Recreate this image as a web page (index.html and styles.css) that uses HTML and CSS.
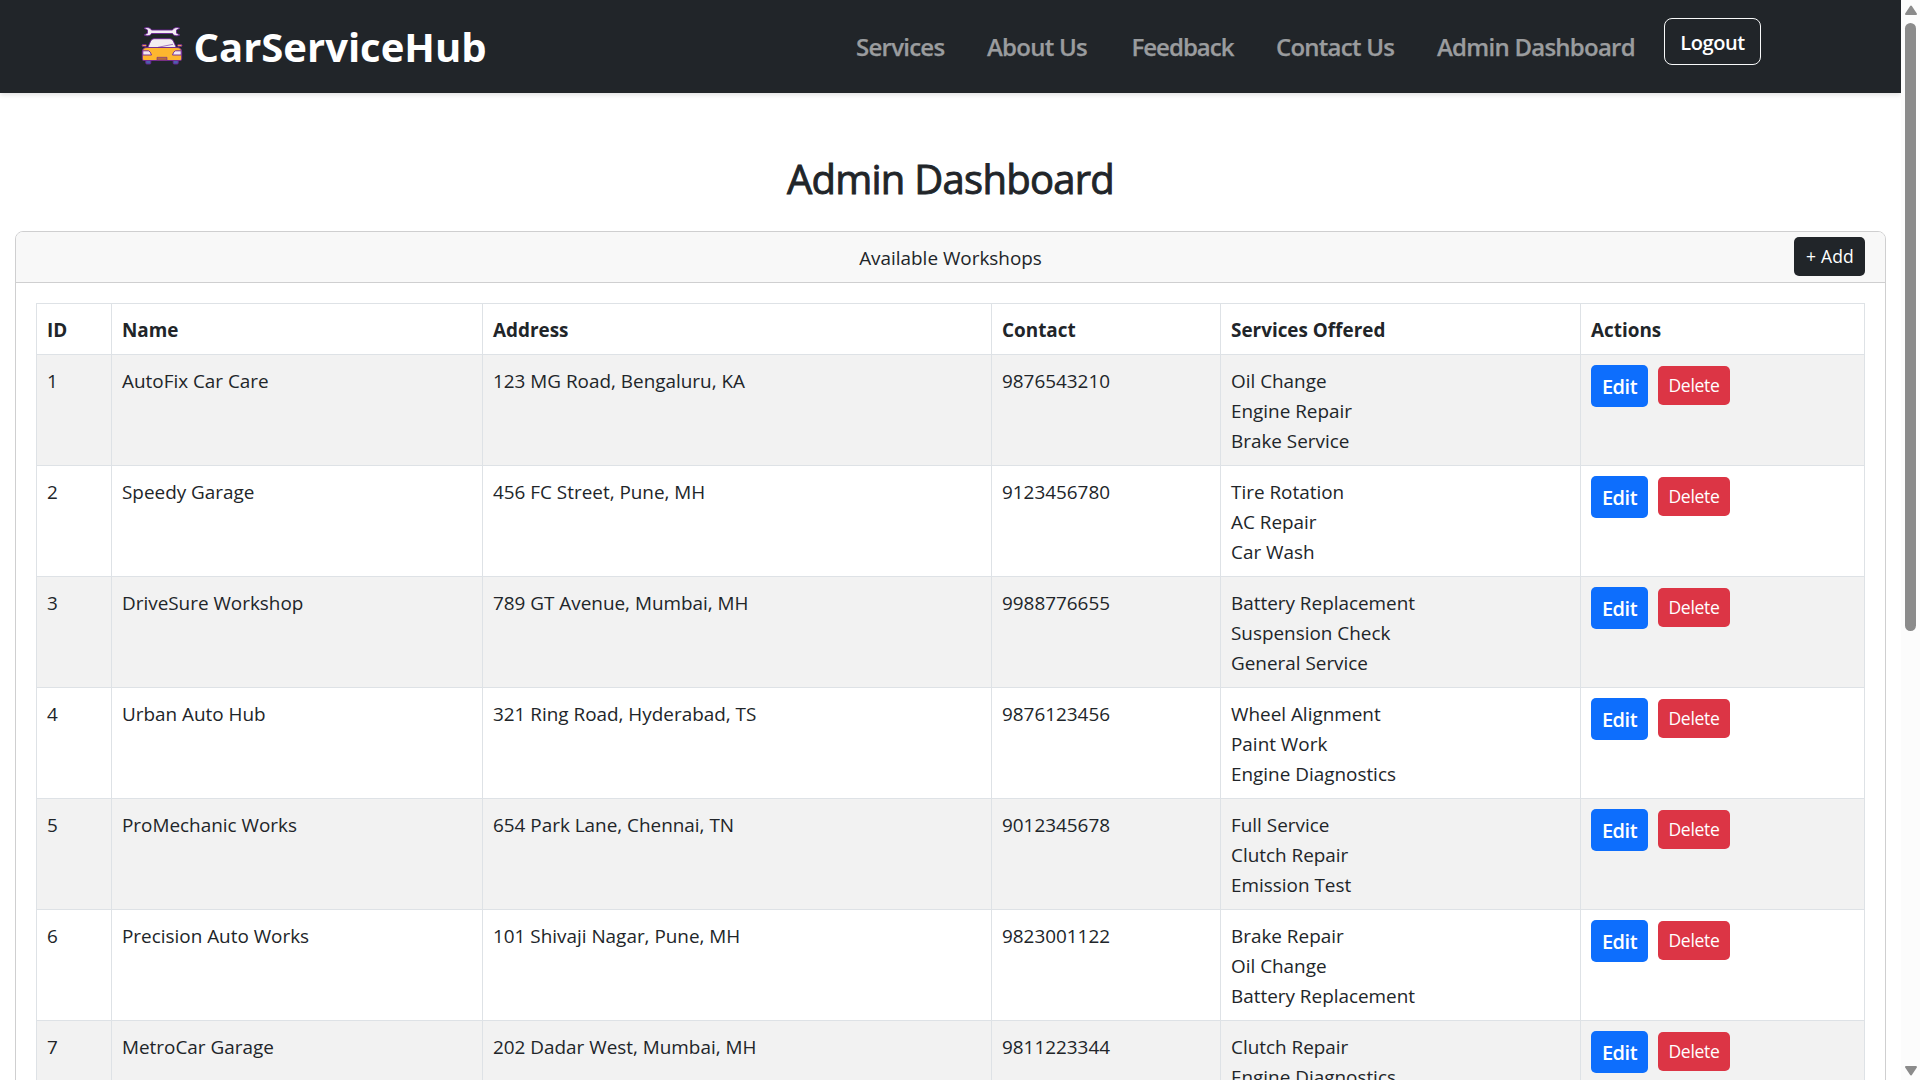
FILE: index.html
```
<!DOCTYPE html>
<html lang="en">
<head>
<meta charset="utf-8">
<title>CarServiceHub - Admin Dashboard</title>
<link rel="stylesheet" href="styles.css">
</head>
<body>
<div class="page">
  <nav class="navbar">
    <a class="brand">
      <svg class="brand-logo" viewBox="0 0 42 40" aria-hidden="true">
        <g stroke="#6c2396" stroke-width=".9" stroke-linejoin="round">
          <path d="M3.2 2.2C6.8.6 9.6 2.2 10.5 4H31.5C32.4 2.200 35.200.600 38.800 2.200L35.500 4V7.200L38.800 9C35.200 10.600 32.400 9.500 31.500 7.500H10.500C9.600 9.500 6.800 10.600 3.200 9L6.500 7.200V4Z" fill="#f3edf3"/>
          <rect x="4.800" y="32" width="5" height="6" rx="1" fill="#4b61ad"/>
          <rect x="32.200" y="32" width="5" height="6" rx="1" fill="#4b61ad"/>
          <rect x="1" y="18.500" width="4.500" height="2" rx="1" fill="#f0a04b"/>
          <rect x="36.500" y="18.500" width="4.500" height="2" rx="1" fill="#f0a04b"/>
          <path d="M6.500 22L9.700 15Q10.800 12.700 13 12.700H29Q31.200 12.700 32.300 15L35.500 22Z" fill="#f3edf0"/>
          <path d="M1.300 26Q1.300 21.500 6 21.500H36Q40.700 21.500 40.700 26V33Q40.700 34.500 39 34.500H3Q1.300 34.500 1.300 33Z" fill="#fdb62f"/>
          <path d="M1.800 24.800H7.500Q9.500 25.300 10.500 29H1.800ZM40.200 24.800H34.500Q32.500 25.300 31.500 29H40.200Z" fill="#f4e9ef"/>
          <path d="M16 31.300H26V34.300H16Z" fill="#b56b3e" stroke-width=".6"/>
          <path d="M17 21.300L32 18.300" stroke-width=".6"/>
        </g>
      </svg>
      <span>CarServiceHub</span>
    </a>
    <ul class="nav-links">
      <li>Services</li><li>About Us</li><li class="tight">Feedback</li><li>Contact Us</li><li>Admin Dashboard</li>
    </ul>
    <button class="logout">Logout</button>
  </nav>
  <main>
    <h1>Admin Dashboard</h1>
    <section class="card">
      <header class="card-header"><span>Available Workshops</span><button class="btn add">+ Add</button></header>
      <div class="card-body">
        <table>
          <colgroup><col class="c-id"><col class="c-name"><col class="c-address"><col class="c-contact"><col class="c-services"><col class="c-actions"></colgroup>
          <thead><tr><th>ID</th><th>Name</th><th>Address</th><th>Contact</th><th>Services Offered</th><th>Actions</th></tr></thead>
          <tbody>
            <tr><td>1</td><td>AutoFix Car Care</td><td>123 MG Road, Bengaluru, KA</td><td>9876543210</td><td>Oil Change<br>Engine Repair<br>Brake Service</td><td class="actions"><div><button class="btn edit">Edit</button><button class="btn delete">Delete</button></div></td></tr>
            <tr><td>2</td><td>Speedy Garage</td><td>456 FC Street, Pune, MH</td><td>9123456780</td><td>Tire Rotation<br>AC Repair<br>Car Wash</td><td class="actions"><div><button class="btn edit">Edit</button><button class="btn delete">Delete</button></div></td></tr>
            <tr><td>3</td><td>DriveSure Workshop</td><td>789 GT Avenue, Mumbai, MH</td><td>9988776655</td><td>Battery Replacement<br>Suspension Check<br>General Service</td><td class="actions"><div><button class="btn edit">Edit</button><button class="btn delete">Delete</button></div></td></tr>
            <tr><td>4</td><td>Urban Auto Hub</td><td>321 Ring Road, Hyderabad, TS</td><td>9876123456</td><td>Wheel Alignment<br>Paint Work<br>Engine Diagnostics</td><td class="actions"><div><button class="btn edit">Edit</button><button class="btn delete">Delete</button></div></td></tr>
            <tr><td>5</td><td>ProMechanic Works</td><td>654 Park Lane, Chennai, TN</td><td>9012345678</td><td>Full Service<br>Clutch Repair<br>Emission Test</td><td class="actions"><div><button class="btn edit">Edit</button><button class="btn delete">Delete</button></div></td></tr>
            <tr><td>6</td><td>Precision Auto Works</td><td>101 Shivaji Nagar, Pune, MH</td><td>9823001122</td><td>Brake Repair<br>Oil Change<br>Battery Replacement</td><td class="actions"><div><button class="btn edit">Edit</button><button class="btn delete">Delete</button></div></td></tr>
            <tr><td>7</td><td>MetroCar Garage</td><td>202 Dadar West, Mumbai, MH</td><td>9811223344</td><td>Clutch Repair<br>Engine Diagnostics</td><td class="actions"><div><button class="btn edit">Edit</button><button class="btn delete">Delete</button></div></td></tr>
          </tbody>
        </table>
      </div>
    </section>
  </main>
</div>
<div class="scrollbar" aria-hidden="true">
  <svg width="14" height="11" viewBox="0 0 14 11"><path d="M7 1.500L12 9H2Z" fill="#8b8b8b" stroke="#8b8b8b" stroke-width="2" stroke-linejoin="round"/></svg>
  <div class="thumb"></div>
  <svg class="down" width="14" height="11" viewBox="0 0 14 11"><path d="M7 9.500L12 2H2Z" fill="#8b8b8b" stroke="#8b8b8b" stroke-width="2" stroke-linejoin="round"/></svg>
</div>
</body>
</html>
```
FILE: styles.css
```
* { box-sizing: border-box; }
body {
  margin: 0;
  height: 1080px;
  display: flex;
  overflow: hidden;
  background: #fff;
  color: #212529;
  font: 400 18.9px/30px "Open Sans", "Noto Sans", sans-serif;
}
.page { flex: 1; min-width: 0; height: 1080px; overflow: hidden; }
button { font-family: inherit; margin: 0; }

.navbar {
  height: 93px;
  padding: 0 140px 0 141px;
  display: flex;
  align-items: flex-start;
  background: #212529;
  box-shadow: 0 2px 5px rgba(0, 0, 0, .12);
}
.brand {
  display: flex;
  align-items: flex-start;
  gap: 10.5px;
  padding-top: 26px;
  color: #fff;
  font-size: 40px;
  font-weight: 700;
  line-height: 46px;
}
.brand span { margin-top: -2px; }
.brand-logo { width: 42px; height: 40px; }
.nav-links {
  display: grid;
  grid-template-columns: 131px 144.500px 144.500px 161px 227px;
  margin: 30px 0 0 auto;
  padding: 0;
  list-style: none;
  color: #9a9c9e;
  font-size: 24px;
  font-weight: 600;
  line-height: 34px;
  letter-spacing: -.75px;
  white-space: nowrap;
  -webkit-text-stroke: .25px currentColor;
}
.nav-links .tight { letter-spacing: -1px; }
.logout {
  width: 97px;
  height: 47px;
  margin-top: 18px;
  padding: 2px 0 0;
  border: 1px solid #f8f9fa;
  border-radius: 8px;
  background: none;
  color: #fff;
  font-size: 20px;
  font-weight: 600;
  letter-spacing: -.4px;
  line-height: 43px;
}

main { padding: 0 15px; }
h1 {
  margin: 62px 0 28px;
  text-align: center;
  font-size: 40px;
  font-weight: 500;
  line-height: 48px;
  letter-spacing: -.74px;
  -webkit-text-stroke: .9px currentColor;
}
.card { border: 1px solid #cfcfd0; border-radius: 8px; }
.card-header {
  position: relative;
  height: 51px;
  padding-top: 11px;
  border-bottom: 1px solid #cfcfd0;
  border-radius: 7px 7px 0 0;
  background: #f8f8f8;
  text-align: center;
}
.card-body { padding: 20px; }

.btn {
  padding: 0;
  border: 0;
  border-radius: 5px;
  color: #fff;
  font-size: 17.5px;
  height: 39px;
  line-height: 39px;
}
.add { position: absolute; right: 20px; top: 5px; width: 71px; padding-left: 1px; background: #212529; letter-spacing: .2px; }
.edit { width: 57px; height: 42px; background: #0d6efd; font-size: 20px; font-weight: 600; line-height: 43px; letter-spacing: -.5px; }
.delete { width: 72px; margin-top: 1px; background: #dc3545; letter-spacing: -.3px; }

table { width: 1829px; table-layout: fixed; border-collapse: collapse; }
.c-id { width: 75px; }
.c-name { width: 371px; }
.c-address { width: 509px; }
.c-contact { width: 229px; }
.c-services { width: 360px; }
.c-actions { width: 284px; }
th, td {
  padding: 11px 10px 9px;
  border: 1px solid #dee2e6;
  text-align: left;
  vertical-align: top;
}
th { font-weight: 700; }
tbody tr:nth-child(odd) { background: #f2f2f2; }
.actions { padding-top: 10px; }
.actions div { display: flex; align-items: flex-start; gap: 10px; }

.scrollbar {
  width: 19px;
  height: 1080px;
  padding: 5px 0 4px;
  display: flex;
  flex-direction: column;
  align-items: center;
  background: #fcfcfc;
}
.thumb { width: 11px; height: 608px; margin-top: 7px; border-radius: 6px; background: #8b8b8b; }
.down { margin-top: auto; }
```
